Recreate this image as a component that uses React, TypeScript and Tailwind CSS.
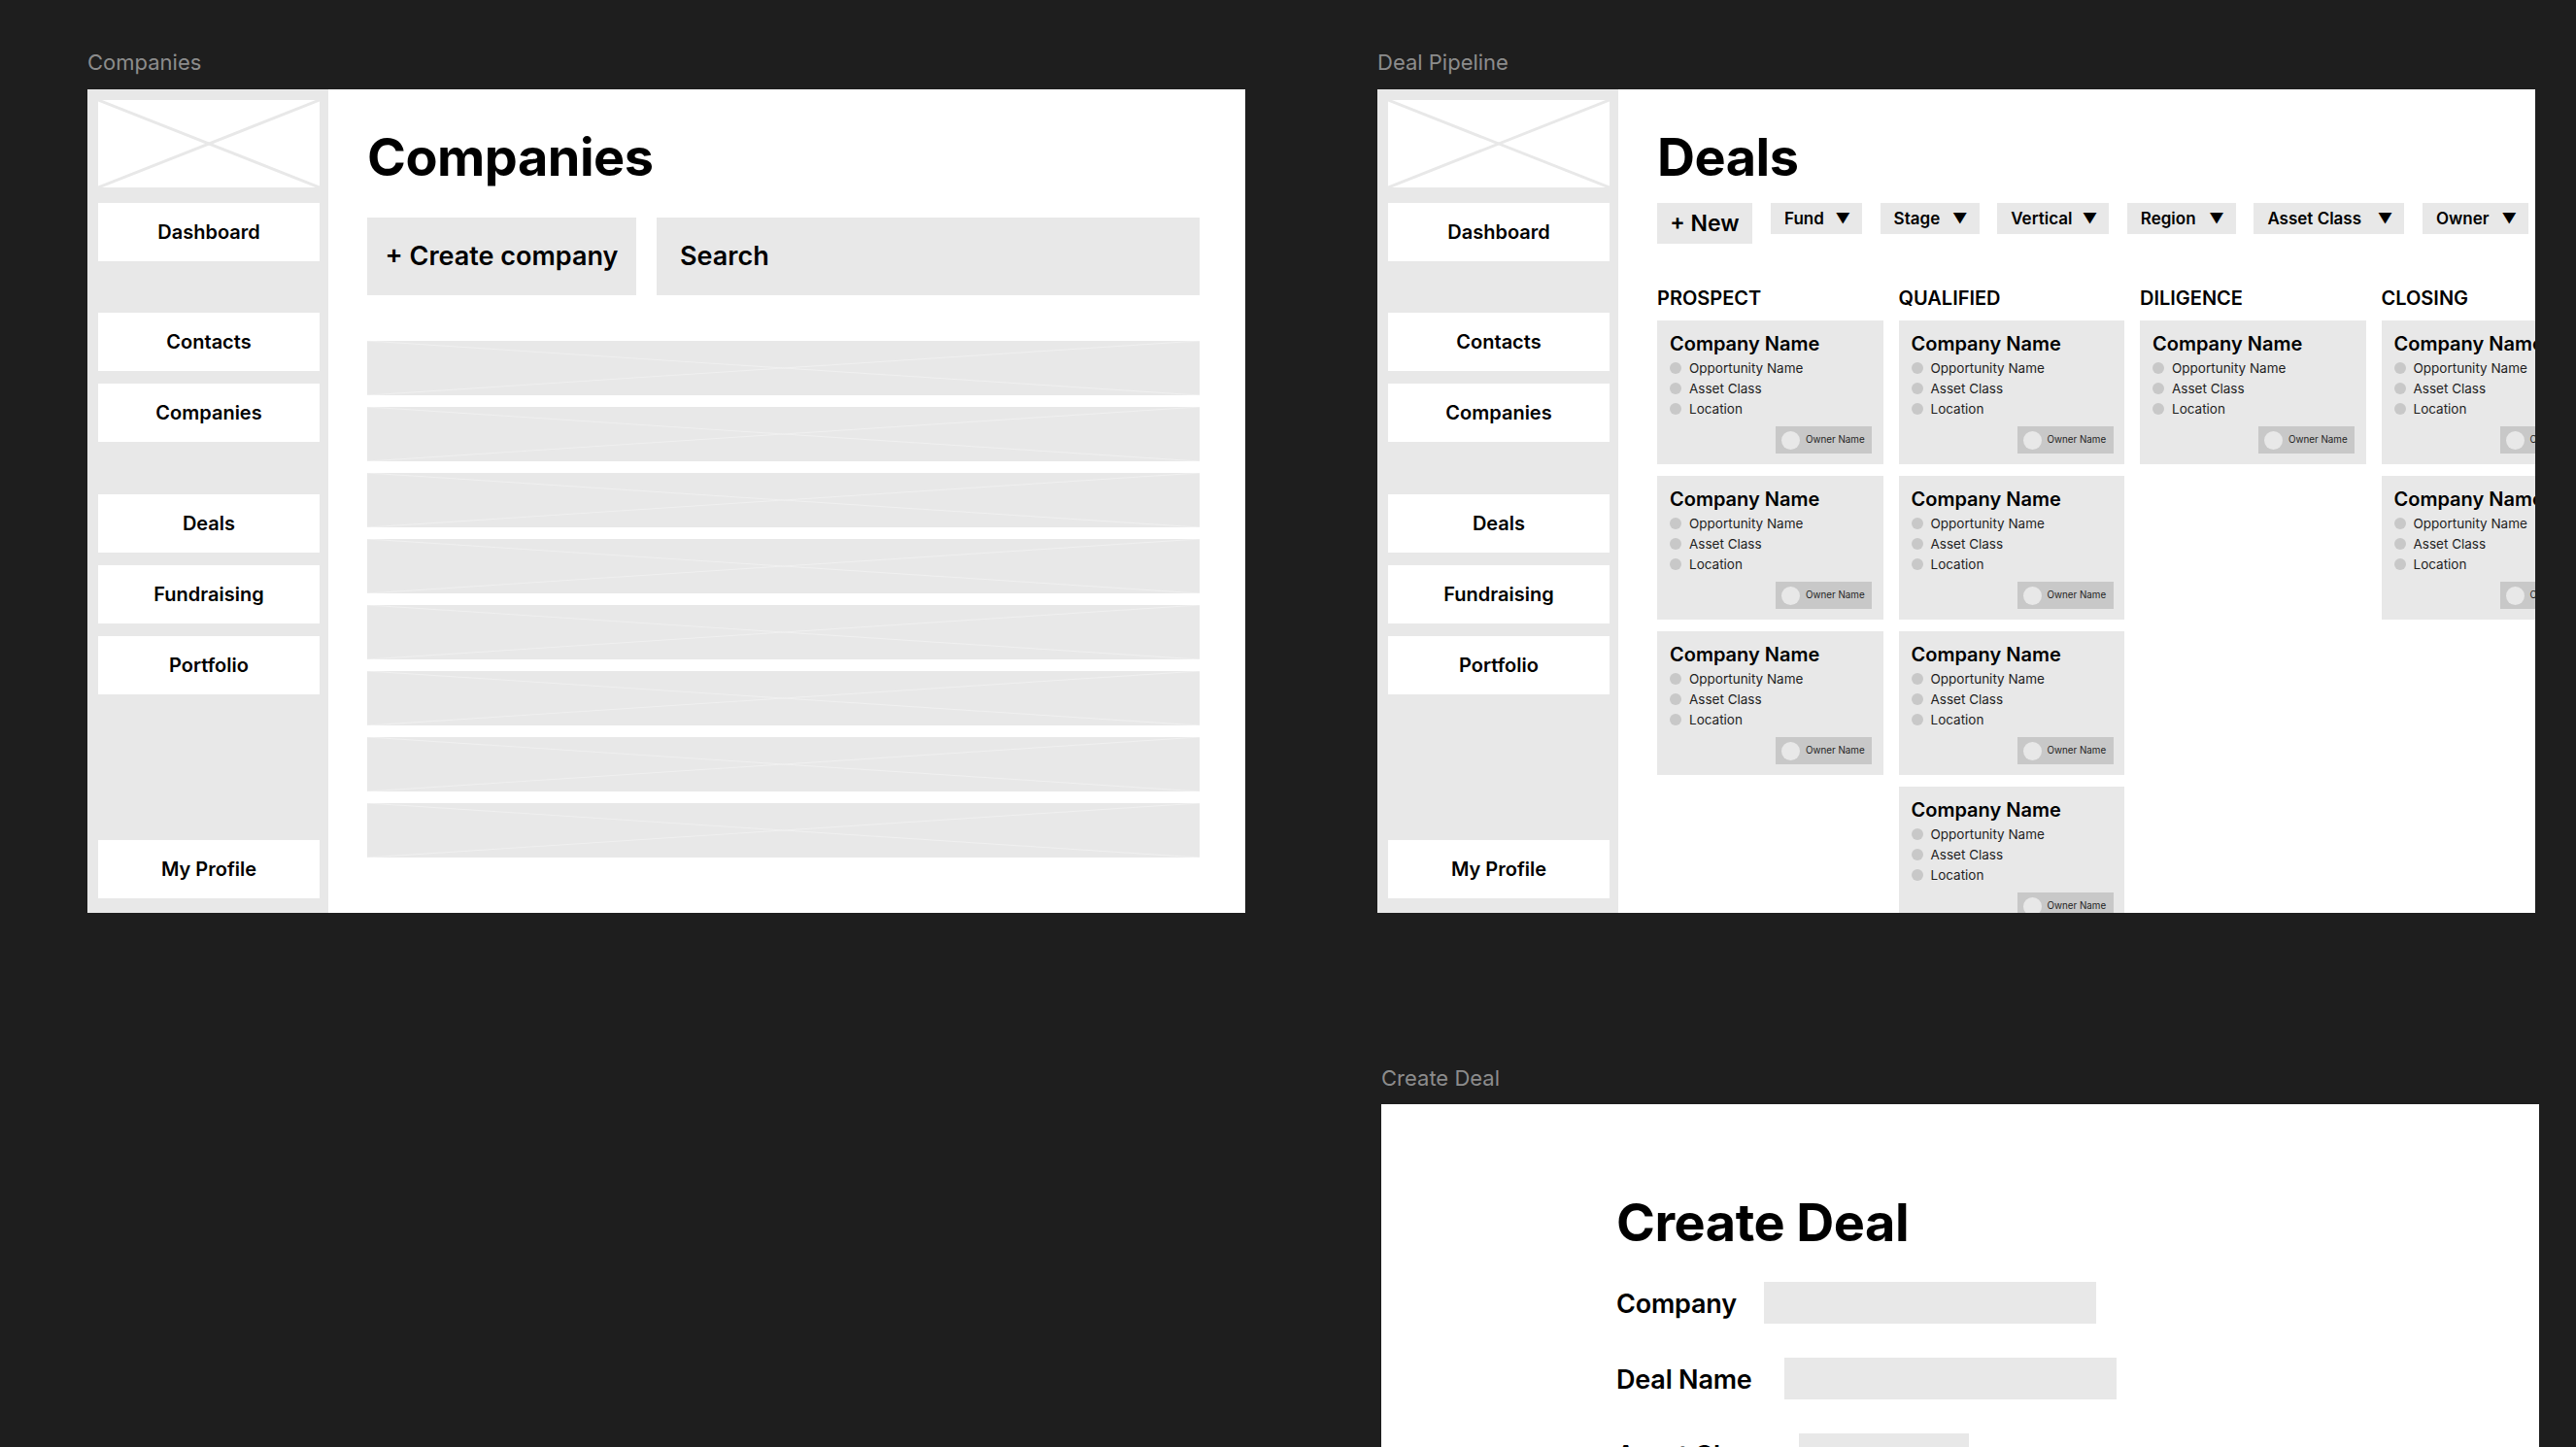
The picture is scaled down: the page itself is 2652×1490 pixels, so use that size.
const navTop = ['Contacts', 'Companies'];
const navMid = ['Deals', 'Fundraising', 'Portfolio'];
const filters = [
  { label: 'Fund', w: 'w-[94px]' },
  { label: 'Stage', w: 'w-[102px]' },
  { label: 'Vertical', w: 'w-[115px]' },
  { label: 'Region', w: 'w-[112px]' },
  { label: 'Asset Class', w: 'w-[155px]' },
  { label: 'Owner', w: 'w-[109px]' },
];
const columns = [
  { name: 'PROSPECT', cards: 3 },
  { name: 'QUALIFIED', cards: 4 },
  { name: 'DILIGENCE', cards: 1 },
  { name: 'CLOSING', cards: 2 },
];

function Cross({ className }: { className: string }) {
  return (
    <svg className="absolute inset-0 w-full h-full" viewBox="0 0 100 100" preserveAspectRatio="none">
      <line x1="0" y1="0" x2="100" y2="100" className={className} vectorEffect="non-scaling-stroke" />
      <line x1="100" y1="0" x2="0" y2="100" className={className} vectorEffect="non-scaling-stroke" />
    </svg>
  );
}

function NavItem({ label, className = '' }: { label: string; className?: string }) {
  return (
    <div className={`h-[60px] shrink-0 bg-white flex items-center justify-center text-[20px] font-semibold text-black ${className}`}>
      {label}
    </div>
  );
}

function Sidebar() {
  return (
    <div className="w-[248px] shrink-0 h-full bg-[#e8e8e8] flex flex-col pt-[11px] pb-[15px] pl-[11px] pr-[9px]">
      <div className="relative h-[90px] shrink-0 bg-white">
        <Cross className="stroke-[#e8e8e8] [stroke-width:3px]" />
      </div>
      <NavItem label="Dashboard" className="mt-[16px]" />
      <div className="mt-[53px] flex flex-col gap-[13px]">
        {navTop.map(n => <NavItem key={n} label={n} />)}
      </div>
      <div className="mt-[54px] flex flex-col gap-[13px]">
        {navMid.map(n => <NavItem key={n} label={n} />)}
      </div>
      <NavItem label="My Profile" className="mt-auto" />
    </div>
  );
}

function DealCard() {
  return (
    <div className="relative h-[148px] shrink-0 bg-[#e8e8e8] pl-[13px] pt-[11px]">
      <div className="text-[20px] leading-[26px] font-semibold text-black whitespace-nowrap">Company Name</div>
      <div className="mt-[2px] flex flex-col">
        {['Opportunity Name', 'Asset Class', 'Location'].map(t => (
          <div key={t} className="h-[20.7px] flex items-center gap-[8px] text-[13.5px] text-[#1e1e1e] whitespace-nowrap">
            <span className="w-[12px] h-[12px] rounded-full bg-[#c8c8c8] shrink-0" />
            {t}
          </div>
        ))}
      </div>
      <div className="absolute left-[122px] top-[109px] w-[99px] h-[28px] bg-[#c8c8c8] flex items-center pl-[6px] gap-[6px] text-[9.8px] text-[#1e1e1e] whitespace-nowrap">
        <span className="w-[19px] h-[19px] rounded-full bg-[#e8e8e8] shrink-0" />
        Owner Name
      </div>
    </div>
  );
}

function CompaniesFrame() {
  return (
    <div className="absolute left-[90px] top-[92px] w-[1192px] h-[848px] bg-white flex overflow-hidden">
      <Sidebar />
      <div className="flex-1 pl-[40px] pr-[47px] pt-[36px]">
        <h1 className="text-[54px] leading-[68px] font-bold tracking-[-0.5px] text-black">Companies</h1>
        <div className="mt-[28px] flex gap-[21px]">
          <div className="w-[277px] h-[80px] bg-[#e8e8e8] flex items-center justify-center text-[27px] font-semibold text-black">+ Create company</div>
          <div className="flex-1 h-[80px] bg-[#e8e8e8] flex items-center pl-[24px] text-[27px] font-semibold text-black">Search</div>
        </div>
        <div className="mt-[47px] flex flex-col gap-[12px]">
          {[0, 1, 2, 3, 4, 5, 6, 7].map(i => (
            <div key={i} className="relative h-[56px] bg-[#e8e8e8]">
              <Cross className="stroke-[#f0f0f0] [stroke-width:1px]" />
            </div>
          ))}
        </div>
      </div>
    </div>
  );
}

function DealsFrame() {
  return (
    <div className="absolute left-[1418px] top-[92px] w-[1192px] h-[848px] bg-white flex overflow-hidden">
      <Sidebar />
      <div className="flex-1 min-w-0 pl-[40px] pt-[36px]">
        <h1 className="text-[54px] leading-[68px] font-bold tracking-[-0.5px] text-black">Deals</h1>
        <div className="mt-[13px] flex items-start">
          <div className="w-[98px] h-[42px] bg-[#e8e8e8] flex items-center justify-center text-[23px] font-semibold text-black">+ New</div>
          <div className="ml-[19px] flex gap-[18.6px]">
            {filters.map(f => (
              <div key={f.label} className={`${f.w} h-[32px] bg-[#e8e8e8] flex items-center justify-between pt-[1px] pl-[14px] pr-[12px] text-[17px] font-semibold text-black whitespace-nowrap`}>
                <span>{f.label}</span>
                <span className="text-[15px]">▼</span>
              </div>
            ))}
          </div>
        </div>
        <div className="mt-[41px] flex gap-[16px]">
          {columns.map(c => (
            <div key={c.name} className="w-[232.5px] shrink-0 flex flex-col">
              <div className="h-[30px] flex items-center text-[20px] font-semibold text-black">{c.name}</div>
              <div className="mt-[8px] flex flex-col gap-[12px]">
                {Array.from({ length: c.cards }).map((_, i) => <DealCard key={i} />)}
              </div>
            </div>
          ))}
        </div>
      </div>
    </div>
  );
}

function FormRow({ label, w, gap }: { label: string; w: string; gap: string }) {
  return (
    <div className="flex items-center h-[43px] text-[27px] font-semibold tracking-[-0.2px] text-black whitespace-nowrap">
      <span className="pt-[3px]">{label}</span>
      <span className={`${w} ${gap} h-[43px] bg-[#e8e8e8] shrink-0`} />
    </div>
  );
}

function CreateDealFrame() {
  return (
    <div className="absolute left-[1422px] top-[1137px] w-[1192px] h-[700px] bg-white pl-[242px] pt-[88px]">
      <h1 className="text-[54px] leading-[68px] font-bold tracking-[-0.5px] text-black">Create Deal</h1>
      <div className="mt-[27px] flex flex-col gap-[35px]">
        <FormRow label="Company" w="w-[342px]" gap="ml-[28px]" />
        <FormRow label="Deal Name" w="w-[342px]" gap="ml-[33px]" />
        <FormRow label="Asset Class" w="w-[175px]" gap="ml-[37px]" />
      </div>
    </div>
  );
}

export default function App() {
  return (
    <div className="relative w-[2652px] h-[1490px] overflow-hidden bg-[#1e1e1e] font-['Inter',sans-serif]">
      <div className="absolute left-[90px] top-[50px] text-[22px] leading-[28px] text-[#8c8c8c]">Companies</div>
      <CompaniesFrame />
      <div className="absolute left-[1418px] top-[50px] text-[22px] leading-[28px] text-[#8c8c8c]">Deal Pipeline</div>
      <DealsFrame />
      <div className="absolute left-[1422px] top-[1096px] text-[22px] leading-[28px] text-[#8c8c8c]">Create Deal</div>
      <CreateDealFrame />
    </div>
  );
}
